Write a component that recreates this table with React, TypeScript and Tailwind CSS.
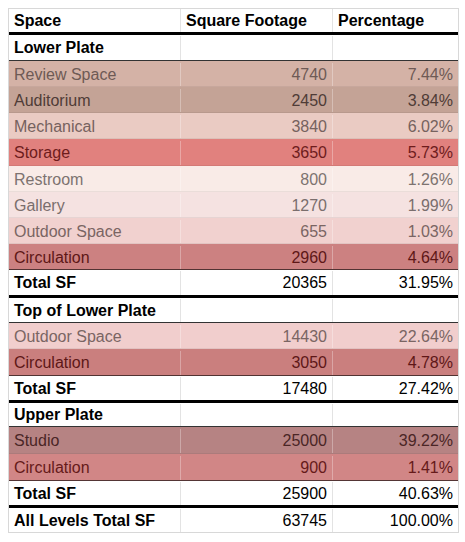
import { FC } from "react";
import clsx from "clsx";

type Row = {
  name: string;
  sf: string;
  pct: string;
  bg: string;
  text: string;
  last?: boolean;
  tall?: boolean;
};

const lowerPlate: Row[] = [
  { name: "Review Space", sf: "4740", pct: "7.44%", bg: "bg-[#d4b2a6]", text: "text-[#6e5a55]" },
  { name: "Auditorium", sf: "2450", pct: "3.84%", bg: "bg-[#c4a396]", text: "text-[#4f3c37]" },
  { name: "Mechanical", sf: "3840", pct: "6.02%", bg: "bg-[#eacbc3]", text: "text-[#76625e]" },
  { name: "Storage", sf: "3650", pct: "5.73%", bg: "bg-[#e1817e]", text: "text-[#6e1c1c]", tall: true },
  { name: "Restroom", sf: "800", pct: "1.26%", bg: "bg-[#f9ebe7]", text: "text-[#7d7370]" },
  { name: "Gallery", sf: "1270", pct: "1.99%", bg: "bg-[#f5e2e1]", text: "text-[#7a6e6d]" },
  { name: "Outdoor Space", sf: "655", pct: "1.03%", bg: "bg-[#f1d1cf]", text: "text-[#7a6563]" },
  { name: "Circulation", sf: "2960", pct: "4.64%", bg: "bg-[#cc8181]", text: "text-[#5e1717]", last: true },
];

const topPlate: Row[] = [
  { name: "Outdoor Space", sf: "14430", pct: "22.64%", bg: "bg-[#f1cecd]", text: "text-[#7a6563]" },
  { name: "Circulation", sf: "3050", pct: "4.78%", bg: "bg-[#ca7f7e]", text: "text-[#5e1717]", last: true, tall: true },
];

const upperPlate: Row[] = [
  { name: "Studio", sf: "25000", pct: "39.22%", bg: "bg-[#b68383]", text: "text-[#4a2626]", tall: true },
  { name: "Circulation", sf: "900", pct: "1.41%", bg: "bg-[#d18686]", text: "text-[#661a1a]", last: true, tall: true },
];

const DataRow: FC<{ row: Row }> = ({ row }) => (
  <div
    className={clsx(
      "flex items-center border-b pt-[2px]",
      row.tall ? "h-[27px]" : "h-[26px]",
      row.bg,
      row.text,
      row.last ? "border-black/60" : "border-black/[0.06]"
    )}
  >
    <div className="w-[172px] pl-[5px] border-r border-white/30 h-full flex items-center">{row.name}</div>
    <div className="w-[152px] pr-[5px] border-r border-white/30 h-full flex items-center justify-end">{row.sf}</div>
    <div className="flex-1 pr-[5px] h-full flex items-center justify-end">{row.pct}</div>
  </div>
);

const BoldRow: FC<{ cells: [string, string, string]; className?: string; alignRight?: boolean }> = ({
  cells,
  className,
  alignRight = true,
}) => (
  <div className={clsx("flex items-center bg-white text-black", className)}>
    <div className="w-[172px] pl-[5px] border-r border-[#e3e3e3] h-full flex items-center font-bold">{cells[0]}</div>
    <div
      className={clsx(
        "w-[152px] border-r border-[#e3e3e3] h-full flex items-center",
        alignRight ? "justify-end pr-[5px]" : "pl-[5px] font-bold"
      )}
    >
      {cells[1]}
    </div>
    <div className={clsx("flex-1 h-full flex items-center", alignRight ? "justify-end pr-[5px]" : "pl-[5px] font-bold")}>
      {cells[2]}
    </div>
  </div>
);

const SectionRow: FC<{ title: string; h: string }> = ({ title, h }) => (
  <BoldRow cells={[title, "", ""]} className={clsx(h, "border-b border-black/80 pt-px")} />
);

export default function App() {
  return (
    <div className="w-[465px] h-[542px] bg-white pt-[8px] pl-[8px] font-['Liberation_Sans',Arial,sans-serif] text-[16px] leading-none">
      <div className="w-[451px] border border-[#d8d8d8]">
        <BoldRow
          cells={["Space", "Square Footage", "Percentage"]}
          alignRight={false}
          className="h-[26px] border-b-[3px] border-black"
        />
        <SectionRow title="Lower Plate" h="h-[26px]" />
        {lowerPlate.map((r, i) => (
          <DataRow key={i} row={r} />
        ))}
        <BoldRow cells={["Total SF", "20365", "31.95%"]} className="h-[28px] border-b-[3px] border-black pt-px" />

        <SectionRow title="Top of Lower Plate" h="h-[25px]" />
        {topPlate.map((r, i) => (
          <DataRow key={i} row={r} />
        ))}
        <BoldRow cells={["Total SF", "17480", "27.42%"]} className="h-[27px] border-b-[3px] border-black pt-px" />

        <SectionRow title="Upper Plate" h="h-[24px]" />
        {upperPlate.map((r, i) => (
          <DataRow key={i} row={r} />
        ))}
        <BoldRow cells={["Total SF", "25900", "40.63%"]} className="h-[27px] border-b-[3px] border-black pt-px" />

        <BoldRow cells={["All Levels Total SF", "63745", "100.00%"]} className="h-[24px] pt-px" />
      </div>
    </div>
  );
}
